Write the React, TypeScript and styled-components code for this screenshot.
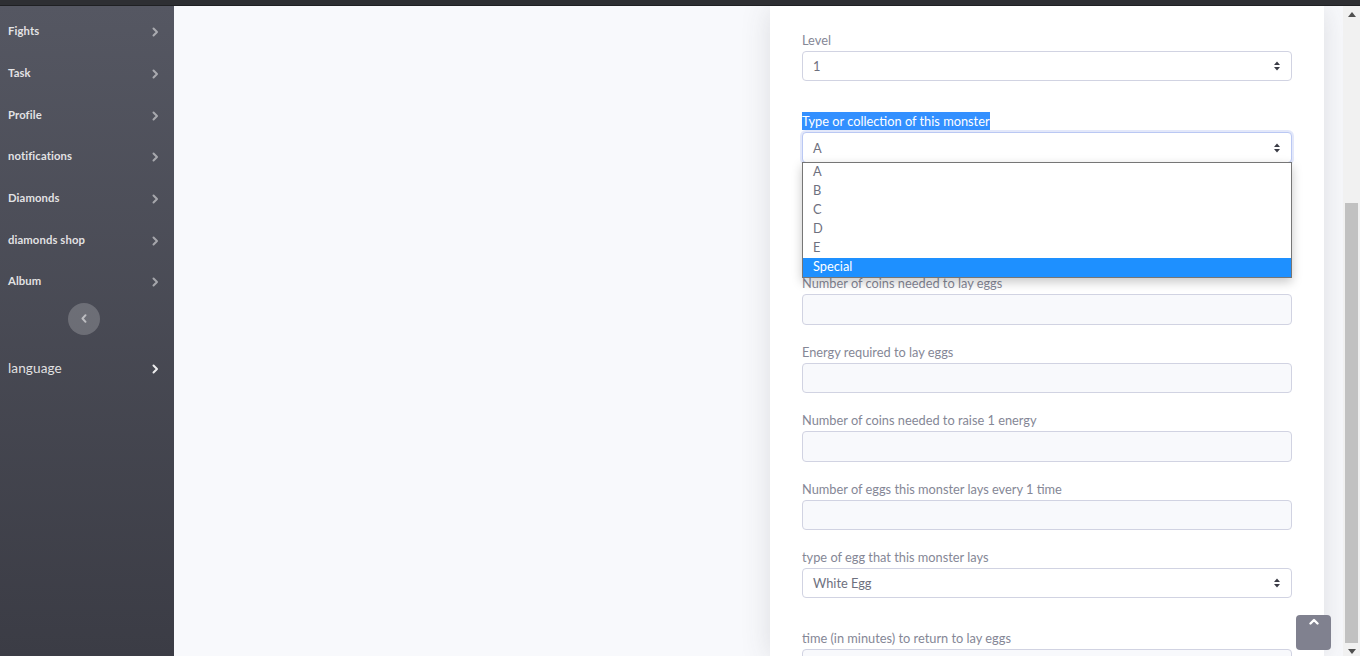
import React from "react";
import styled, { createGlobalStyle } from "styled-components";

const GlobalStyle = createGlobalStyle`
  html, body {
    margin: 0;
    padding: 0;
    height: 100%;
    overflow: hidden;
  }
  body {
    font-family: Lato, "Open Sans", Arial, sans-serif;
  }
  * { box-sizing: border-box; }
`;

const Page = styled.div`
  display: flex;
  flex-direction: column;
  height: 100vh;
  width: 100vw;
  position: relative;
`;

const TopStrip = styled.div`
  height: 6px;
  flex: none;
  background: #2e2f33;
  border-bottom: 1px solid #1f2023;
`;

const Body = styled.div`
  flex: 1;
  min-height: 0;
  display: flex;
`;

const Sidebar = styled.nav`
  width: 174px;
  flex: none;
  background-color: #5a5c69;
  background-image: linear-gradient(180deg, #555762 0%, #3b3c45 100%);
  padding-top: 4px;
  display: flex;
  flex-direction: column;
`;

const NavItem = styled.div`
  height: 41.7px;
  display: flex;
  align-items: center;
  justify-content: space-between;
  padding: 0 15px 0 8px;
  color: rgba(255, 255, 255, 0.85);
  font-family: Lato, "Open Sans", sans-serif;
  font-weight: 700;
  font-size: 11.3px;
  letter-spacing: 0.1px;
`;

const Chevron = styled.svg<{ $bright?: boolean }>`
  width: 7px;
  height: 10px;
  margin-top: 3px;
  color: ${(p) => (p.$bright ? "rgba(255,255,255,0.9)" : "rgba(255,255,255,0.5)")};
`;

const CollapseRow = styled.div`
  display: flex;
  justify-content: center;
  padding: 0 6px 0 0;
  height: 34px;
  align-items: center;
`;

const CollapseButton = styled.div`
  width: 32px;
  height: 32px;
  border-radius: 50%;
  background: rgba(255, 255, 255, 0.2);
  display: flex;
  align-items: center;
  justify-content: center;
  color: rgba(255, 255, 255, 0.55);
`;

const LangItem = styled(NavItem)`
  margin-top: 14px;
  height: 36px;
  font-weight: 400;
  font-size: 13.6px;
  color: rgba(255, 255, 255, 0.85);
`;

const Main = styled.main`
  flex: 1;
  min-width: 0;
  background: #f8f9fc;
  display: flex;
  justify-content: flex-end;
  padding-right: 19px;
  overflow: hidden;
`;

const Card = styled.section`
  width: 554px;
  background: #fff;
  box-shadow: 0 0.15rem 1.75rem 0 rgba(58, 59, 69, 0.15);
  padding: 25px 32px 0;
  align-self: stretch;
`;

const Group = styled.div<{ $gap: number }>`
  margin-bottom: ${(p) => p.$gap}px;
  position: relative;
`;

const Label = styled.div`
  font-size: 12.8px;
  line-height: 18px;
  color: #858796;
  margin-bottom: 2px;
`;

const Highlight = styled.span`
  display: inline-block;
  background: #3390ff;
  color: #fff;
  line-height: 18px;
`;

const SelectBox = styled.div<{ $focus?: boolean }>`
  position: relative;
  height: 30.4px;
  border: 1px solid ${(p) => (p.$focus ? "#bac8f3" : "#d1d3e2")};
  border-radius: 4px;
  background: #fff;
  box-shadow: ${(p) => (p.$focus ? "0 0 0 2px rgba(78,115,223,0.16)" : "none")};
  display: flex;
  align-items: center;
  justify-content: space-between;
  padding: 0 11px 0 10px;
  font-size: 12.8px;
  color: #6e707e;
`;

const Arrows = styled.svg`
  width: 6px;
  height: 10px;
  color: #3a3b45;
`;

const TextInput = styled.div`
  height: 30.4px;
  border: 1px solid #d1d3e2;
  border-radius: 4px;
  background: #f8f9fc;
`;

const Dropdown = styled.ul`
  position: absolute;
  top: 100%;
  left: -1px;
  right: -1px;
  margin: 0;
  padding: 0;
  list-style: none;
  background: #fff;
  border: 1px solid #767676;
  box-shadow: 0 4px 10px rgba(0, 0, 0, 0.22);
  z-index: 5;
`;

const Option = styled.li<{ $active?: boolean }>`
  height: 19px;
  line-height: 17px;
  padding-left: 10px;
  font-size: 12.8px;
  color: ${(p) => (p.$active ? "#fff" : "#6e707e")};
  background: ${(p) => (p.$active ? "#1e90ff" : "transparent")};
`;

const Scrollbar = styled.div`
  width: 17px;
  flex: none;
  background: #f1f1f1;
  display: flex;
  flex-direction: column;
`;

const ScrollArrow = styled.div`
  height: 17px;
  flex: none;
  display: flex;
  align-items: center;
  justify-content: center;
  color: #505050;
`;

const Track = styled.div`
  flex: 1;
  padding: 180px 2px 0;
`;

const Thumb = styled.div`
  height: 440px;
  background: #c1c1c1;
`;

const ScrollTop = styled.div`
  position: absolute;
  right: 29px;
  bottom: 6px;
  width: 35px;
  height: 35px;
  border-radius: 4px;
  background: #80818f;
  display: flex;
  justify-content: center;
  padding-top: 3px;
  color: #fff;
`;

const ChevronRight = ({ bright }: { bright?: boolean }) => (
  <Chevron $bright={bright} viewBox="0 0 7 10">
    <path d="M1.5 1.5 L5 5 L1.5 8.5" fill="none" stroke="currentColor" strokeWidth="2" strokeLinecap="round" strokeLinejoin="round" />
  </Chevron>
);

const SelectArrows = () => (
  <Arrows viewBox="0 0 6 10">
    <polygon points="0,4 3,0.6 6,4" fill="currentColor" />
    <polygon points="0,6 3,9.4 6,6" fill="currentColor" />
  </Arrows>
);

const navItems = ["Fights", "Task", "Profile", "notifications", "Diamonds", "diamonds shop", "Album"];
const options = ["A", "B", "C", "D", "E", "Special"];

const inputFields = [
  "Number of coins needed to lay eggs",
  "Energy required to lay eggs",
  "Number of coins needed to raise 1 energy",
  "Number of eggs this monster lays every 1 time",
];

export default function App() {
  return (
    <>
      <GlobalStyle />
      <Page>
        <TopStrip />
        <Body>
          <Sidebar>
            {navItems.map((n) => (
              <NavItem key={n}>
                <span>{n}</span>
                <ChevronRight />
              </NavItem>
            ))}
            <CollapseRow>
              <CollapseButton>
                <svg width="6" height="9" viewBox="0 0 6 9">
                  <path d="M4.5 1.2 L1.5 4.5 L4.5 7.8" fill="none" stroke="currentColor" strokeWidth="2" strokeLinecap="round" strokeLinejoin="round" />
                </svg>
              </CollapseButton>
            </CollapseRow>
            <LangItem>
              <span>language</span>
              <ChevronRight bright />
            </LangItem>
          </Sidebar>
          <Main>
            <Card>
              <Group $gap={31}>
                <Label>Level</Label>
                <SelectBox>
                  <span>1</span>
                  <SelectArrows />
                </SelectBox>
              </Group>
              <Group $gap={111.6}>
                <Label>
                  <Highlight>Type or collection of this monster</Highlight>
                </Label>
                <SelectBox $focus>
                  <span>A</span>
                  <SelectArrows />
                  <Dropdown>
                    {options.map((o) => (
                      <Option key={o} $active={o === "Special"}>
                        {o}
                      </Option>
                    ))}
                  </Dropdown>
                </SelectBox>
              </Group>
              {inputFields.map((f) => (
                <Group key={f} $gap={18}>
                  <Label>{f}</Label>
                  <TextInput />
                </Group>
              ))}
              <Group $gap={31}>
                <Label>type of egg that this monster lays</Label>
                <SelectBox>
                  <span>White Egg</span>
                  <SelectArrows />
                </SelectBox>
              </Group>
              <Group $gap={18}>
                <Label>time (in minutes) to return to lay eggs</Label>
                <TextInput />
              </Group>
            </Card>
          </Main>
          <Scrollbar>
            <ScrollArrow>
              <svg width="8" height="5" viewBox="0 0 8 5"><polygon points="0,5 4,0 8,5" fill="currentColor" /></svg>
            </ScrollArrow>
            <Track>
              <Thumb />
            </Track>
            <ScrollArrow>
              <svg width="8" height="5" viewBox="0 0 8 5"><polygon points="0,0 4,5 8,0" fill="currentColor" /></svg>
            </ScrollArrow>
          </Scrollbar>
        </Body>
        <ScrollTop>
          <svg width="10" height="7" viewBox="0 0 10 7">
            <path d="M1.5 5.5 L5 2 L8.5 5.5" fill="none" stroke="currentColor" strokeWidth="2.4" strokeLinecap="round" strokeLinejoin="round" />
          </svg>
        </ScrollTop>
      </Page>
    </>
  );
}
